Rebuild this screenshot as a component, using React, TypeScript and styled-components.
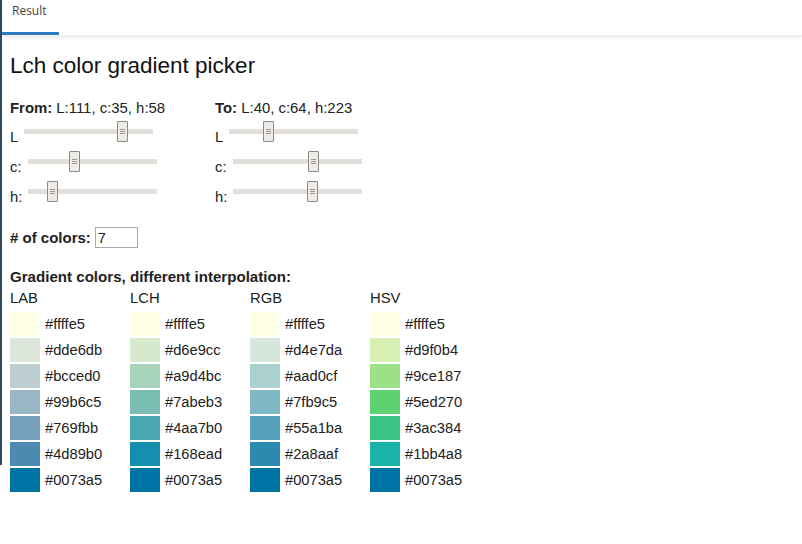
import React, { useState } from 'react';
import styled, { createGlobalStyle } from 'styled-components';

const GlobalStyle = createGlobalStyle`
  html, body {
    margin: 0;
    padding: 0;
    background: #fff;
  }
  body {
    font-family: Arial, "Liberation Sans", sans-serif;
    color: #222;
  }
`;

const Page = styled.div`
  display: flex;
  align-items: flex-start;
  width: 802px;
  min-height: 544px;
`;

const Strip = styled.div`
  width: 2px;
  height: 465px;
  flex: none;
  background: #2f4a5a;
`;

const Main = styled.div`
  flex: 1;
  display: flex;
  flex-direction: column;
`;

const TabBar = styled.div`
  display: flex;
  height: 35px;
  background: #fff;
  box-shadow: 0 2px 3px rgba(0, 0, 0, 0.07);
  border-bottom: 1px solid #f0f0f0;
`;

const Tab = styled.div<{ active?: boolean }>`
  width: 57px;
  box-sizing: border-box;
  padding: 2px 0 0 10px;
  font-family: "Open Sans", "Liberation Sans", sans-serif;
  font-size: 12px;
  line-height: 17px;
  color: #444;
  border-bottom: 3px solid ${({ active }) => (active ? '#2e7bc4' : 'transparent')};
`;

const Content = styled.div`
  padding: 16px 8px 0;
`;

const Title = styled.h1`
  margin: 0 0 20px;
  font-size: 22.5px;
  font-weight: normal;
  line-height: 28px;
  color: #111;
`;

const Pickers = styled.div`
  display: flex;
  gap: 5px;
`;

const Picker = styled.div`
  width: 200px;
`;

const PickerHead = styled.div`
  font-size: 14.9px;
  line-height: 16px;
  height: 21px;
`;

const SliderRow = styled.div`
  display: flex;
  align-items: flex-start;
  height: 30px;
`;

const SliderLabel = styled.span`
  margin-top: 8px;
  font-size: 14.8px;
  line-height: 16px;
  white-space: pre;
`;

const Range = styled.input`
  -webkit-appearance: none;
  appearance: none;
  width: 129px;
  height: 21px;
  margin: 0 2px;
  padding: 0;
  background: transparent;

  &::-webkit-slider-runnable-track {
    height: 5px;
    background: #e2dfda;
    border-radius: 0;
  }

  &::-webkit-slider-thumb {
    -webkit-appearance: none;
    box-sizing: border-box;
    width: 11px;
    height: 21px;
    margin-top: -8px;
    border: 1px solid #8c8a87;
    border-radius: 1px;
    background:
      linear-gradient(#9a9895, #9a9895) center 7px / 5px 1px no-repeat,
      linear-gradient(#9a9895, #9a9895) center 9px / 5px 1px no-repeat,
      linear-gradient(#9a9895, #9a9895) center 11px / 5px 1px no-repeat,
      #eeebe6;
  }
`;

const CountRow = styled.div`
  display: flex;
  align-items: center;
  gap: 4px;
  margin-top: 16px;
  font-size: 15px;
`;

const CountInput = styled.input`
  box-sizing: border-box;
  width: 43px;
  height: 21px;
  padding: 0 2px;
  border: 1px solid #a9a9a9;
  font-family: Arial, "Liberation Sans", sans-serif;
  font-size: 14.8px;
  color: #222;
  outline: none;
`;

const SectionTitle = styled.div`
  margin-top: 21px;
  font-size: 15.1px;
  line-height: 16px;
  font-weight: bold;
`;

const Columns = styled.div`
  display: flex;
  margin-top: 5px;
`;

const Column = styled.div`
  width: 120px;
  display: flex;
  flex-direction: column;
`;

const ColumnHead = styled.div`
  font-size: 14.8px;
  line-height: 16px;
  margin-bottom: 6px;
`;

const SwatchList = styled.div`
  display: flex;
  flex-direction: column;
  gap: 2px;
`;

const SwatchRow = styled.div`
  display: flex;
  align-items: center;
  gap: 5px;
  font-size: 14.7px;
`;

const Swatch = styled.div<{ color: string }>`
  width: 30px;
  height: 24px;
  background: ${({ color }) => color};
`;

const gradients: { name: string; colors: string[] }[] = [
  { name: 'LAB', colors: ['#ffffe5', '#dde6db', '#bcced0', '#99b6c5', '#769fbb', '#4d89b0', '#0073a5'] },
  { name: 'LCH', colors: ['#ffffe5', '#d6e9cc', '#a9d4bc', '#7abeb3', '#4aa7b0', '#168ead', '#0073a5'] },
  { name: 'RGB', colors: ['#ffffe5', '#d4e7da', '#aad0cf', '#7fb9c5', '#55a1ba', '#2a8aaf', '#0073a5'] },
  { name: 'HSV', colors: ['#ffffe5', '#d9f0b4', '#9ce187', '#5ed270', '#3ac384', '#1bb4a8', '#0073a5'] },
];

type Lch = { l: number; c: number; h: number };

const SliderSet = ({ title, value, onChange }: { title: string; value: Lch; onChange: (v: Lch) => void }) => (
  <Picker>
    <PickerHead>
      <b>{title}:</b> L:{value.l}, c:{value.c}, h:{value.h}
    </PickerHead>
    <SliderRow>
      <SliderLabel>L </SliderLabel>
      <Range type="range" min={0} max={140} value={value.l} onChange={(e) => onChange({ ...value, l: +e.target.value })} />
    </SliderRow>
    <SliderRow>
      <SliderLabel>c: </SliderLabel>
      <Range type="range" min={0} max={100} value={value.c} onChange={(e) => onChange({ ...value, c: +e.target.value })} />
    </SliderRow>
    <SliderRow>
      <SliderLabel>h: </SliderLabel>
      <Range type="range" min={0} max={360} value={value.h} onChange={(e) => onChange({ ...value, h: +e.target.value })} />
    </SliderRow>
  </Picker>
);

const App = () => {
  const [from, setFrom] = useState<Lch>({ l: 111, c: 35, h: 58 });
  const [to, setTo] = useState<Lch>({ l: 40, c: 64, h: 223 });
  const [count, setCount] = useState('7');

  return (
    <>
      <GlobalStyle />
      <Page>
        <Strip />
        <Main>
          <TabBar>
            <Tab active>Result</Tab>
          </TabBar>
          <Content>
            <Title>Lch color gradient picker</Title>
            <Pickers>
              <SliderSet title="From" value={from} onChange={setFrom} />
              <SliderSet title="To" value={to} onChange={setTo} />
            </Pickers>
            <CountRow>
              <b># of colors:</b>
              <CountInput value={count} onChange={(e) => setCount(e.target.value)} />
            </CountRow>
            <SectionTitle>Gradient colors, different interpolation:</SectionTitle>
            <Columns>
              {gradients.map((g) => (
                <Column key={g.name}>
                  <ColumnHead>{g.name}</ColumnHead>
                  <SwatchList>
                    {g.colors.map((c, i) => (
                      <SwatchRow key={i}>
                        <Swatch color={c} />
                        {c}
                      </SwatchRow>
                    ))}
                  </SwatchList>
                </Column>
              ))}
            </Columns>
          </Content>
        </Main>
      </Page>
    </>
  );
};

export default App;
